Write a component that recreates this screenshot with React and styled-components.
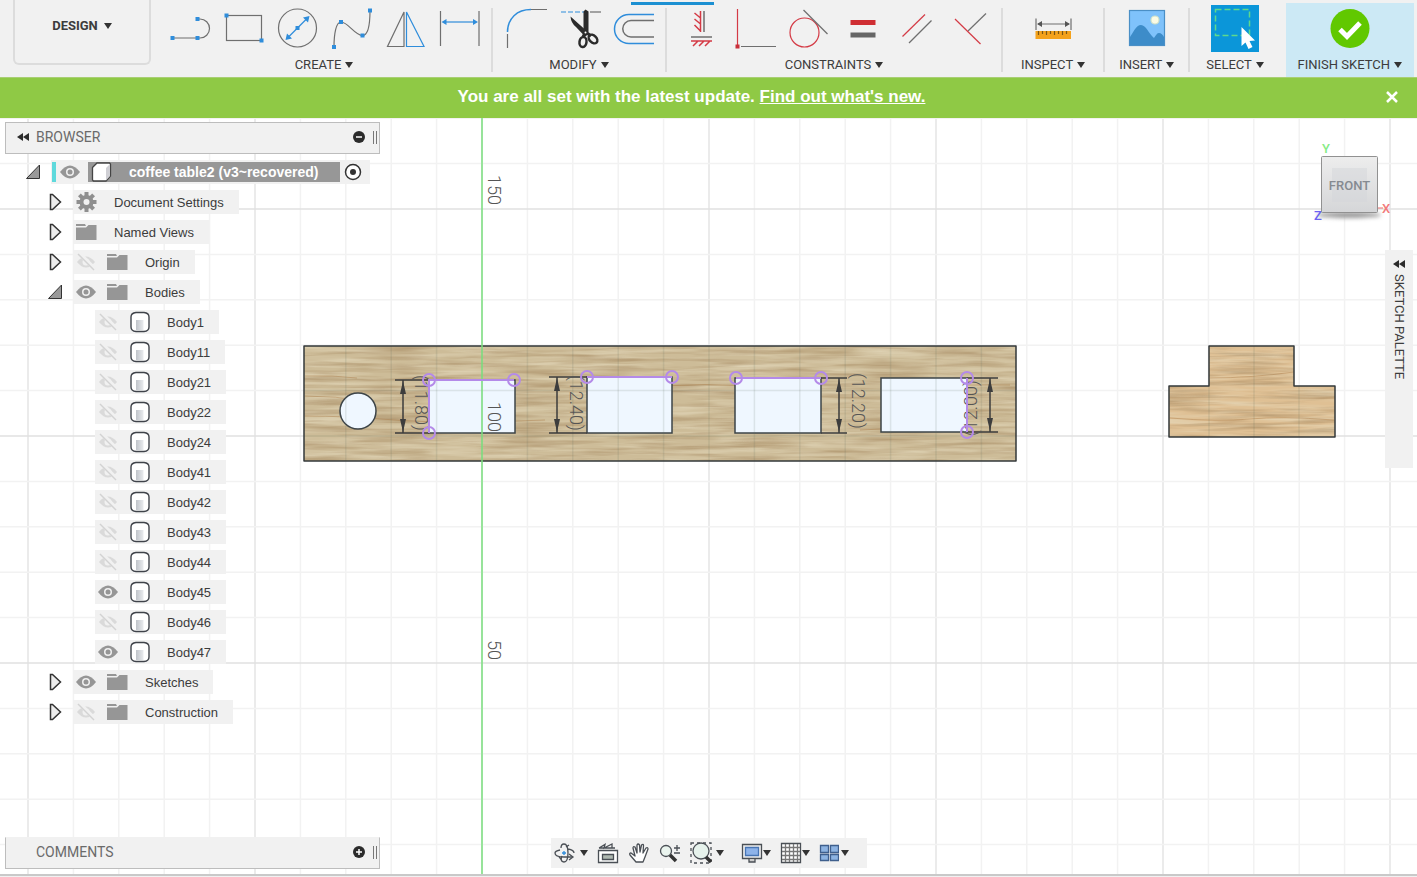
import React from "react";
import styled, { createGlobalStyle, css } from "styled-components";

const GlobalStyle = createGlobalStyle`
  * {
    box-sizing: border-box;
  }
  body {
    margin: 0;
    background: #f1f1f1;
    font-family: "Liberation Sans", Arial, sans-serif;
    color: #3c3c3c;
  }
  button {
    margin: 0;
    padding: 0;
    border: 0;
    background: none;
    font: inherit;
    color: inherit;
    cursor: pointer;
  }
  svg {
    display: block;
  }
`;

// page
const Page = styled.div`
  min-height: 100vh;
  display: flex;
  flex-direction: column;
  padding-bottom: 1px;
`;

// toolbar
const Toolbar = styled.header`
  position: relative;
  display: flex;
  height: 77px;
  padding-right: 3px;
  background: #f1f1f1;
  font-family: Roboto, "Liberation Sans", sans-serif;
  font-size: 13px;
`;
const ActiveTab = styled.div`
  position: absolute;
  top: 2px;
  left: 631px;
  width: 83px;
  height: 3px;
  background: #1c90d2;
`;
const Workspace = styled.button`
  display: flex;
  align-items: center;
  justify-content: center;
  gap: 6px;
  width: 138px;
  height: 65px;
  margin: 0 6px 0 13px;
  padding-bottom: 12px;
  border: 2px solid #dcdcdc;
  border-top: 0;
  border-radius: 0 0 6px 6px;
  font-weight: 700;
`;
const Caret = styled.span`
  flex: none;
  border: 4px solid transparent;
  border-top: 6px solid #333;
  border-bottom: 0;
`;
const Group = styled.section`
  display: flex;
  flex-direction: column;
  align-items: center;
  padding: 5px ${(p) => p.$pad}px 0;
  position: relative;
  margin-right: 2px;
  ${(p) =>
    p.$divider &&
    css`
      &::after {
        content: "";
        position: absolute;
        top: 8px;
        right: -2px;
        width: 2px;
        height: 64px;
        background: #dcdcdc;
      }
    `}
`;
const FinishGroup = styled.section`
  display: flex;
  flex-direction: column;
  align-items: center;
  margin: 3px 0 0 auto;
  padding: 2px 12px 0;
  background: #cce9f5;
`;
const Tools = styled.div`
  display: flex;
`;
const Tool = styled.button`
  width: 54px;
  height: 47px;
`;
const GroupLabel = styled.button`
  display: flex;
  align-items: center;
  gap: 4px;
  height: 25px;
  line-height: 25px;
  white-space: nowrap;
`;

// update banner
const Banner = styled.div`
  display: grid;
  grid-template-columns: 50px 1fr 50px;
  align-items: center;
  height: 41px;
  padding-bottom: 2px;
  border-top: 1px solid #a9cf74;
  background: #8fc945;
  color: #fff;
  font-size: 17px;
  font-weight: 700;
`;
const BannerText = styled.p`
  grid-column: 2;
  margin: 0;
  padding-right: 34px;
  text-align: center;
`;
const BannerLink = styled.a`
  color: #fff;
`;
const BannerClose = styled.button`
  display: flex;
  justify-content: center;
`;

// viewport
const Viewport = styled.main`
  position: relative;
  flex: 1;
  display: flex;
  flex-direction: column;
  padding: 4px 4px 5px 5px;
  border-bottom: 2px solid #c9c9c9;
  background: #fff;
  overflow: hidden;
`;
const Scene = styled.svg`
  position: absolute;
  inset: 0;
  width: 100%;
  height: 100%;
`;
const SceneText = styled.text`
  font-family: Roboto, "Liberation Sans", sans-serif;
  font-size: 18px;
  font-weight: 300;
  fill: #555;
`;
const Panels = styled.div`
  position: relative;
  flex: 1;
  display: flex;
  justify-content: space-between;
`;
const Footer = styled.footer`
  position: relative;
  display: grid;
  grid-template-columns: 1fr auto 1fr;
  align-items: center;
`;
const PanelHeader = styled.div`
  display: flex;
  align-items: center;
  width: 375px;
  height: 32px;
  padding: 0 2px 2px 10px;
  border: 1px solid #bdbdbd;
  ${(p) => p.$footer && "border-top-color: #f1f1f1;"}
  background: #f1f1f1;
  font-family: Roboto, "Liberation Sans", sans-serif;
  font-size: 14px;
  color: #6a6a6a;
`;
const PanelTitle = styled.h2`
  flex: 1;
  margin: 0;
  font: inherit;
`;
const HeaderSlot = styled.button`
  width: 20px;
  height: 8px;
`;
const Grip = styled.span`
  width: 4px;
  height: 13px;
  margin-left: 8px;
  border: 1px solid #777;
  border-width: 0 1px;
`;

// browser tree
const Tree = styled.ul`
  margin: 0;
  padding: ${(p) => (p.$root ? "3px 0 0 20px" : "0 0 0 22px")};
  list-style: none;
`;
const Row = styled.div`
  display: flex;
  align-items: center;
  height: 30px;
`;
const Toggle = styled.button`
  width: 26px;
  height: 18px;
`;
const ToggleSpace = styled.span`
  width: 26px;
`;
const RowBody = styled.div`
  display: flex;
  align-items: center;
  height: 24px;
  padding: 0 15px 0 3px;
  background: #f1f1f1;
  font-size: 13px;
  white-space: nowrap;
`;
const Eye = styled.button`
  width: 31px;
  height: 20px;
`;
const RowIcon = styled.span`
  width: 38px;
`;
const RootBody = styled.div`
  display: flex;
  align-items: center;
  height: 24px;
  padding: 0 8px 0 1px;
  background: #f1f1f1;
`;
const RootMark = styled.span`
  width: 4px;
  height: 20px;
  margin-right: 4px;
  background: #5fd9dc;
`;
const RootName = styled.div`
  display: flex;
  align-items: center;
  width: 252px;
  height: 20px;
  padding-left: 3px;
  margin: 0 4px 0 -3px;
  background: #979797;
  color: #fff;
  font-size: 14px;
  font-weight: 700;
`;

// right side
const Side = styled.aside`
  display: flex;
  flex-direction: column;
  align-items: flex-end;
`;
const ViewCube = styled.svg`
  margin: 16px 18px 22px 0;
`;
const AxisText = styled.text`
  font-family: Roboto, sans-serif;
  font-size: 13px;
  font-weight: 500;
`;
const Palette = styled.button`
  display: flex;
  flex-direction: column;
  align-items: center;
  gap: 6px;
  width: 28px;
  height: 218px;
  padding-top: 10px;
  background: #f1f1f1;
`;
const PaletteTitle = styled.span`
  writing-mode: vertical-rl;
  font-family: Roboto, "Liberation Sans", sans-serif;
  font-size: 13px;
`;

// navigation bar
const NavBar = styled.nav`
  display: flex;
  align-items: center;
  gap: 9px;
  width: 316px;
  height: 30px;
  padding-left: 3px;
  background: #f1f1f1;
`;
const NavButton = styled.button`
  display: flex;
  align-items: center;
  gap: ${(p) => p.$gap || 0}px;
  margin-left: ${(p) => (p.$apart ? 8 : 0)}px;
`;

const GREY = "#6f6f6f";
const BLUE = "#2f8ddb";
const RED = "#d43a45";

const Dot = ({ x, y, fill = BLUE }) => (
  <rect x={x - 2} y={y - 2} width="4" height="4" fill={fill} />
);

const ToolIcon = ({ children }) => (
  <svg width="54" height="47" viewBox="0 0 54 47" fill="none" stroke={GREY} strokeWidth="1.2">
    {children}
  </svg>
);

const createTools = [
  {
    name: "Line",
    icon: (
      <>
        <path d="M10.5 33H38a9.5 9.5 0 0 0 0-19h-2.5" />
        <g stroke="none">
          <Dot x={10.5} y={33} />
          <Dot x={35.5} y={33} />
          <Dot x={35.5} y={14} />
        </g>
      </>
    ),
  },
  {
    name: "Rectangle",
    icon: (
      <>
        <rect x="10.5" y="10.5" width="35" height="25" />
        <g stroke="none">
          <Dot x={10.5} y={10.5} />
          <Dot x={45.5} y={35.5} />
        </g>
      </>
    ),
  },
  {
    name: "Circle",
    icon: (
      <>
        <circle cx="27.5" cy="23" r="19" />
        <path d="M19 31.5 36 14.5" stroke={BLUE} />
        <g stroke="none" fill={BLUE}>
          <path d="m39.5 11-1.5 6.5-5-5zM15.500 35l1.5-6.500 5 5z" />
          <Dot x={27.5} y={23} />
        </g>
      </>
    ),
  },
  {
    name: "Spline",
    icon: (
      <>
        <path d="M10 42C10 29 12 17 17 17c7 0 14 13.5 21.5 13.5C45 30.5 46 16 46 5.5" />
        <g stroke="none">
          <Dot x={10} y={42} />
          <Dot x={17} y={17} />
          <Dot x={38.5} y={30.5} />
          <Dot x={46} y={5.5} />
        </g>
      </>
    ),
  },
  {
    name: "Mirror",
    icon: (
      <>
        <path d="M26 7v34.5H9.5z" />
        <path d="M28.5 7v34.5H46z" stroke={BLUE} />
      </>
    ),
  },
  {
    name: "Dimension",
    icon: (
      <>
        <path d="M8.5 6v35M47 6v35" />
        <path d="M12 17h32" stroke={BLUE} />
        <path d="m9.5 17 5-3v6zM46 17l-5-3v6z" fill={BLUE} stroke="none" />
      </>
    ),
  },
];

const modifyTools = [
  {
    name: "Fillet",
    icon: (
      <>
        <path d="M9.5 29v14M33 4.5h16" />
        <path d="M9.5 27C9.5 13.5 19 4.5 33 4.5" stroke={BLUE} strokeWidth="1.5" />
      </>
    ),
  },
  {
    name: "Trim",
    icon: (
      <>
        <path d="M9 7h24" stroke={BLUE} strokeDasharray="5 2" />
        <path d="M38 7h11" />
        <path d="M31.5 6.5 33.5 4.5l3 2V27l-3 2.5-2-2z" fill="#2b2b2b" stroke="none" />
        <path d="M18.5 11.5 33 24.5l4 4.5-4 2.5-9-9.5q-5-4-5.5-10.5z" fill="#2b2b2b" stroke="none" />
        <path d="m33 28-2 4M35 28l4 3" stroke="#2b2b2b" strokeWidth="3" />
        <ellipse cx="31" cy="37" rx="3.5" ry="5" stroke="#2b2b2b" strokeWidth="2.5" transform="rotate(8 31 37)" />
        <ellipse cx="41" cy="34" rx="3.5" ry="5" stroke="#2b2b2b" strokeWidth="2.5" transform="rotate(-45 41 34)" />
        <circle cx="33.5" cy="27.5" r="1" fill="#fff" stroke="none" />
      </>
    ),
  },
  {
    name: "Offset",
    icon: (
      <>
        <path d="M48 9.5H23a14.5 14.5 0 0 0 0 29h25" stroke={BLUE} strokeWidth="1.5" />
        <path d="M48 15.5H25a8 8 0 0 0 0 16.5h23" strokeWidth="1.5" />
      </>
    ),
  },
];

const constraintTools = [
  {
    name: "Horizontal/Vertical",
    icon: (
      <>
        <path d="M32 6v21M19 32h21" strokeWidth="1.5" />
        <path
          d="M28.5 6v21M22.5 8l6 5M22.5 14l6 5M22.5 20l6 6M19 36h21M26 36l-5 5M32 36l-5 5M38 36l-5 5"
          stroke={RED}
          strokeWidth="1.5"
        />
      </>
    ),
  },
  {
    name: "Coincident",
    icon: (
      <>
        <path d="M15 41.5h35" />
        <path d="M11.5 4v36" stroke={RED} />
        <rect x="9.5" y="39.5" width="4" height="4" fill="#c92f39" stroke="none" />
      </>
    ),
  },
  {
    name: "Tangent",
    icon: (
      <>
        <circle cx="24.5" cy="27.5" r="14.5" stroke={RED} />
        <path d="m23.5 5 24 24" />
      </>
    ),
  },
  {
    name: "Equal",
    icon: (
      <>
        <path d="M16.5 17.5h25" stroke="#cf2e33" strokeWidth="5" />
        <path d="M16.5 30h25" stroke="#666" strokeWidth="5" />
      </>
    ),
  },
  {
    name: "Parallel",
    icon: (
      <>
        <path d="m14.5 31.5 22.5-22" stroke={RED} />
        <path d="m21 38 22.5-22.5" />
      </>
    ),
  },
  {
    name: "Perpendicular",
    icon: (
      <>
        <path d="m26 26 18-17.5" />
        <path d="m13 14 25.5 25" stroke={RED} />
      </>
    ),
  },
];

const InspectIcon = () => (
  <ToolIcon>
    <path d="M10 13.5V25M45 13.5V25M12 19h31" />
    <path d="m11 19 5-3v6zM44 19l-5-3v6z" fill="#555" stroke="none" />
    <rect x="9.5" y="26" width="35.5" height="8" fill="#f4a21c" stroke="none" />
    <path d="M12.5 26v4M16.5 26v3M20.5 26v4M24.5 26v3M28.5 26v4M32.5 26v3M36.5 26v4M40.5 26v3" stroke="#7a5614" />
  </ToolIcon>
);

const InsertIcon = () => (
  <ToolIcon>
    <rect x="9.5" y="5.5" width="35" height="35" fill="#7fc2fb" stroke="#4a8fc6" />
    <path d="M10 32c3-4 6-12 11-12s8 9 13 13c2-3 3-5 5-5s4 2 5 4v8H10z" fill="#3d8cc9" stroke="none" />
    <circle cx="35" cy="15" r="4" fill="#fbfbe4" stroke="#cfe1c9" />
  </ToolIcon>
);

const SelectIcon = () => (
  <ToolIcon>
    <rect x="3" width="48" height="47" fill="#0b96d9" stroke="none" />
    <rect x="7.5" y="4.5" width="34" height="26" stroke="#5fd98c" strokeWidth="1.5" strokeDasharray="6 3" />
    <path d="M33.5 22v19l4-3.5 3 6.5 4-2-3-6 5.5-.5z" fill="#fff" stroke="none" />
  </ToolIcon>
);

const FinishIcon = () => (
  <ToolIcon>
    <circle cx="27" cy="23.5" r="19.5" fill="#61c800" stroke="none" />
    <path d="m17 24.5 7 7 13-13.5" stroke="#fff" strokeWidth="5" />
  </ToolIcon>
);

const ToolGroup = ({ label, tools }) => (
  <Group $pad={5} $divider>
    <Tools>
      {tools.map((tool) => (
        <Tool key={tool.name} aria-label={tool.name}>
          <ToolIcon>{tool.icon}</ToolIcon>
        </Tool>
      ))}
    </Tools>
    <GroupLabel>
      {label}
      <Caret />
    </GroupLabel>
  </Group>
);

const SingleGroup = ({ label, icon, pad, divider }) => (
  <Group $pad={pad} $divider={divider}>
    <Tool aria-label={label}>{icon}</Tool>
    <GroupLabel>
      {label}
      <Caret />
    </GroupLabel>
  </Group>
);

const CollapseIcon = () => (
  <svg width="14" height="8" viewBox="0 0 14 8">
    <path d="M7 0v8L1 4zM13 0v8L7 4z" fill="#2b2b2b" />
  </svg>
);

const RoundIcon = ({ plus }) => (
  <svg width="12" height="12" viewBox="0 0 12 12">
    <circle cx="6" cy="6" r="6" fill="#2b2b2b" />
    <path d={plus ? "M3 6h6M6 3v6" : "M3 6h6"} stroke="#fff" strokeWidth="1.5" />
  </svg>
);

const ArrowIcon = ({ open }) => (
  <svg width="17" height="18" viewBox="0 0 17 18">
    {open ? (
      <path d="M14.5 2v13.5H1.500z" fill="#999" stroke="#333" />
    ) : (
      <path d="M3.5 1.5h2L13.5 9l-8 7.5h-2z" fill="#ececec" stroke="#333" strokeWidth="1.5" />
    )}
  </svg>
);

const EyeIcon = ({ hidden }) => (
  <svg width="20" height="20" viewBox="0 0 20 20">
    {hidden ? (
      <>
        <path d="M1 10q9-11 18 0-9 11-18 0z" fill="#dadada" />
        <circle cx="10" cy="10" r="3.5" fill="#f1f1f1" />
        <path d="m3 1 16 16" stroke="#f1f1f1" strokeWidth="4" />
        <path d="m2 2 16 16" stroke="#d3d3d3" strokeWidth="1.5" />
      </>
    ) : (
      <g fill="#969696">
        <path d="M0 10q10-13 20 0-10 13-20 0z" />
        <circle cx="10" cy="10" r="4" fill="#f1f1f1" />
        <circle cx="10" cy="10" r="2.5" />
      </g>
    )}
  </svg>
);

const FolderIcon = () => (
  <svg width="21" height="18" viewBox="0 0 21 18">
    <path d="M0 1h9l1 2H0zM0 4.500h10L12.500 2H20.500v15H0z" fill="#969696" />
  </svg>
);

const GearIcon = () => (
  <svg width="21" height="20" viewBox="-10.5 -10 21 20">
    <g fill="#8f8f8f">
      {[0, 45, 90, 135].map((a) => (
        <rect key={a} x="-2" y="-10" width="4" height="20" transform={`rotate(${a})`} />
      ))}
      <circle r="7" />
    </g>
    <circle r="3" fill="#f1f1f1" />
  </svg>
);

const BodyIcon = () => (
  <svg width="22" height="22" viewBox="0 0 22 22">
    <path
      d="M7 1.500h8q5 .5 5 4.500v10q0 4-5 4.500H7q-5-.5-5-4.500V6q0-4 5-4.500z"
      fill="#fff"
      stroke="#3f434a"
      strokeWidth="1.4"
    />
    <path d="M7 9h7.500v10H7z" fill="url(#body-shade)" />
  </svg>
);

const CubeIcon = () => (
  <svg width="21" height="20" viewBox="0 0 21 20">
    <path d="M1.500 5.500 6 1h12.500l1 1v12L15 19H2.500l-1-1z" fill="#fff" stroke="#444" strokeWidth="1.3" />
    <path d="M15 6 19 2v12l-4 4.500z" fill="#cfcfd4" />
  </svg>
);

const icons = { folder: <FolderIcon />, gear: <GearIcon />, body: <BodyIcon /> };

const visibleBodies = ["45", "47"];
const bodies = ["1", "11", "21", "22", "24", "41", "42", "43", "44", "45", "46", "47"].map(
  (n) => ({
    name: `Body${n}`,
    icon: "body",
    eye: visibleBodies.includes(n) ? "on" : "off",
    leaf: true,
  })
);

const nodes = [
  { name: "Document Settings", icon: "gear" },
  { name: "Named Views", icon: "folder" },
  { name: "Origin", icon: "folder", eye: "off" },
  { name: "Bodies", icon: "folder", eye: "on", children: bodies },
  { name: "Sketches", icon: "folder", eye: "on" },
  { name: "Construction", icon: "folder", eye: "off" },
];

const TreeNode = ({ node }) => (
  <li>
    <Row>
      {node.leaf ? (
        <ToggleSpace />
      ) : (
        <Toggle aria-label={`Expand ${node.name}`} aria-expanded={!!node.children}>
          <ArrowIcon open={!!node.children} />
        </Toggle>
      )}
      <RowBody>
        {node.eye && (
          <Eye aria-label={`Show or hide ${node.name}`}>
            <EyeIcon hidden={node.eye === "off"} />
          </Eye>
        )}
        <RowIcon>{icons[node.icon]}</RowIcon>
        {node.name}
      </RowBody>
    </Row>
    {node.children && (
      <Tree>
        {node.children.map((child) => (
          <TreeNode key={child.name} node={child} />
        ))}
      </Tree>
    )}
  </li>
);

const Browser = () => (
  <section>
    <PanelHeader>
      <HeaderSlot aria-label="Collapse browser">
        <CollapseIcon />
      </HeaderSlot>
      <PanelTitle>BROWSER</PanelTitle>
      <button aria-label="Hide browser">
        <RoundIcon />
      </button>
      <Grip />
    </PanelHeader>
    <Tree $root>
      <li>
        <Row>
          <Toggle aria-label="Collapse document" aria-expanded="true">
            <ArrowIcon open />
          </Toggle>
          <RootBody>
            <RootMark />
            <Eye aria-label="Show or hide document">
              <EyeIcon />
            </Eye>
            <RootName>
              <RowIcon>
                <CubeIcon />
              </RowIcon>
              coffee table2 (v3~recovered)
            </RootName>
            <button aria-label="Activate document">
              <svg width="18" height="18" viewBox="0 0 18 18">
                <circle cx="9" cy="9" r="7.5" fill="#fff" stroke="#333" strokeWidth="1.5" />
                <circle cx="9" cy="9" r="3" fill="#333" />
              </svg>
            </button>
          </RootBody>
        </Row>
        <Tree>
          {nodes.map((node) => (
            <TreeNode key={node.name} node={node} />
          ))}
        </Tree>
      </li>
    </Tree>
  </section>
);

// sketch geometry, in scene units with the 150 mark at y = 91
const CELL = 45.4;
const range = (from, to) => Array.from({ length: to - from + 1 }, (_, i) => from + i);

const GridLines = () => (
  <g>
    {range(-10, 50).map((i) => (
      <path
        key={`v${i}`}
        d={`M${482 + i * CELL} 0v2000`}
        stroke={i % 5 === 0 ? "#e4e4e4" : "#f2f2f2"}
        strokeWidth="1.5"
      />
    ))}
    {range(-2, 40).map((i) => (
      <path
        key={`h${i}`}
        d={`M0 ${91 + i * CELL}h4000`}
        stroke={i % 5 === 0 ? "#e0e0e0" : "#f2f2f2"}
        strokeWidth="1.5"
      />
    ))}
  </g>
);

const WoodGrid = () => (
  <g stroke="#5f6a5f" strokeOpacity="0.14" strokeWidth="1.5">
    {range(-3, 11).map((i) => (
      <path key={i} d={`M${482 + i * CELL} 228v115`} />
    ))}
    <path d="M304 272.600h712M304 318h712M1254 228v91M1209 268v51M1299 268v51" />
  </g>
);

const holes = [
  { x: 429, y: 262, w: 86, h: 53 },
  { x: 587, y: 259, w: 85, h: 56 },
  { x: 735, y: 260, w: 86, h: 55 },
  { x: 881, y: 260, w: 86, h: 54 },
];

const dimensions = [
  { x: 403, top: 262, bottom: 315, from: 395, to: 429 },
  { x: 557, top: 259, bottom: 315, from: 549, to: 587 },
  { x: 839, top: 260, bottom: 315, from: 821, to: 847 },
  { x: 990, top: 260, bottom: 314, from: 967, to: 998 },
];

const points = [
  [429, 262],
  [514, 262],
  [429, 315],
  [587, 259],
  [672, 259],
  [736, 260],
  [821, 260],
  [967, 260],
  [967, 314],
];

const SketchScene = () => (
  <Scene role="img" aria-label="Sketch">
    <defs>
      <linearGradient id="body-shade">
        <stop offset="0" stopColor="#bfc3c9" />
        <stop offset="1" stopColor="#e9ebee" />
      </linearGradient>
      <filter id="wood" x="0" y="0" width="100%" height="100%" colorInterpolationFilters="sRGB">
        <feTurbulence type="fractalNoise" baseFrequency="0.014 0.22" numOctaves="3" seed="8" result="noise" />
        <feColorMatrix
          in="noise"
          values="0 0 0 0 .62  0 0 0 0 .5  0 0 0 0 .34  1.2 0 0 0 -.5"
          result="dark"
        />
        <feColorMatrix
          in="noise"
          values="0 0 0 0 .9  0 0 0 0 .86  0 0 0 0 .75  0 1.4 0 0 -.55"
          result="light"
        />
        <feMerge result="grain">
          <feMergeNode in="SourceGraphic" />
          <feMergeNode in="light" />
          <feMergeNode in="dark" />
        </feMerge>
        <feComposite in="grain" in2="SourceGraphic" operator="in" />
      </filter>
    </defs>
    <GridLines />
    <rect x="304" y="228" width="712" height="115" fill="#cdbc98" filter="url(#wood)" />
    <path
      d="M1169 268h40v-40h85v40h41v51h-166z"
      fill="#dfc094"
      filter="url(#wood)"
    />
    <g stroke="#a5733f" strokeOpacity="0.4" fill="none">
      <path d="M305 258q28-1 52 2M305 298q40 0 90 4t150 0M305 278q30 0 62 5M660 268q45-3 90 0M930 267h80M860 312q60-4 120 2" />
      <path d="M1210 260q40 0 84-6M1170 300q50 4 80 1t84 1" />
    </g>
    <g fill="#eff7ff" stroke="#3d4448" strokeWidth="1.5">
      <circle cx="358" cy="293" r="18" />
      {holes.map((h) => (
        <rect key={h.x} x={h.x} y={h.y} width={h.w} height={h.h} />
      ))}
    </g>
    <WoodGrid />
    <g fill="none" stroke="#33383a" strokeWidth="1.5" strokeLinejoin="round">
      <rect x="304" y="228" width="712" height="115" />
      <path d="M1169 268h40v-40h85v40h41v51h-166z" />
    </g>
    <path d="M482 0v2000" stroke="#7be07f" strokeWidth="1.5" />
    {dimensions.map((d) => (
      <g key={d.x} stroke="#3d3d3d" strokeWidth="1.5" fill="#3d3d3d">
        <path d={`M${d.from} ${d.top}H${d.to}M${d.from} ${d.bottom}H${d.to}M${d.x} ${d.top}V${d.bottom}`} />
        <path
          d={`M${d.x} ${d.top + 1}l3 13h-6zM${d.x} ${d.bottom - 1}l3-13h-6z`}
          stroke="none"
        />
      </g>
    ))}
    <SceneText transform="translate(488 57) rotate(90)">150</SceneText>
    <SceneText transform="translate(488 284) rotate(90)">100</SceneText>
    <SceneText transform="translate(488 522) rotate(90)">50</SceneText>
    <SceneText transform="translate(415 257) rotate(90)">(11.80)</SceneText>
    <SceneText transform="translate(570 257) rotate(90)">(12.40)</SceneText>
    <SceneText transform="translate(852 255) rotate(90)">(12.20)</SceneText>
    <SceneText transform="translate(977 318) rotate(-90)">(12.00)</SceneText>
    <g stroke="#b48ae8" strokeWidth="2" fill="none">
      <path d="M429 315v-53h85M587 259h85M736 260h85M967 260v54" />
      {points.map(([x, y]) => (
        <circle key={`${x}-${y}`} cx={x} cy={y} r="6" />
      ))}
    </g>
  </Scene>
);

const Cube = () => (
  <ViewCube width="90" height="90" viewBox="0 0 90 90">
    <defs>
      <linearGradient id="cube-face" x2="0" y2="1">
        <stop offset="0" stopColor="#ededed" />
        <stop offset="1" stopColor="#d5d6d8" />
      </linearGradient>
      <filter id="soft" x="-20%" y="-100%" width="140%" height="300%">
        <feGaussianBlur stdDeviation="2" />
      </filter>
    </defs>
    <ellipse cx="44" cy="77" rx="32" ry="3" fill="#999" filter="url(#soft)" />
    <path d="M73 70h5" stroke="#f06a6a" />
    <rect x="16.5" y="18.5" width="56" height="56" rx="1" fill="url(#cube-face)" stroke="#919191" />
    <rect x="27" y="30" width="35" height="34" fill="#d3d6da" fillOpacity="0.5" />
    <AxisText x="44.5" y="52" textAnchor="middle" fill="#858a91">
      FRONT
    </AxisText>
    <AxisText x="17" y="15" fill="#86ec86">
      Y
    </AxisText>
    <AxisText x="77" y="75" fill="#f27b7b">
      X
    </AxisText>
    <AxisText x="9" y="82" fill="#6c62f2">
      Z
    </AxisText>
  </ViewCube>
);

const NavIcon = ({ children, width = 22 }) => (
  <svg width={width} height="22" viewBox={`0 0 ${width} 22`} fill="none" stroke="#4a4f55" strokeWidth="1.3">
    {children}
  </svg>
);

const NavigationBar = () => (
  <NavBar aria-label="Navigation">
    <NavButton aria-label="Orbit" $gap={4}>
      <NavIcon>
        <path d="M7 6q0-4 3-4 4 0 4 9t-4 9q-3 0-3-4M6 8q-5 1-5 3 0 4 9 4h8M14 7q6 1 6 4" />
        <path d="m15 12 4 3-4 3M8 14l-1 3-2-2M12 5l3-2" />
        <path d="M10 9v4M8 11h4" stroke={BLUE} />
      </NavIcon>
      <Caret />
    </NavButton>
    <NavButton aria-label="Look at">
      <NavIcon>
        <path d="M1.500 8.500h19v12h-19z" fill="#fff" />
        <path d="M5.500 12.500h11v5h-11z" fill="#aeb8b0" />
        <path d="m2 6 6-3.500L7 6l8-4v4M2 6h16" />
      </NavIcon>
    </NavButton>
    <NavButton aria-label="Pan">
      <NavIcon>
        <path
          d="M8 20 2 13q-1-2 1-2l4 3-2-8q0-2 2-1l2 6V3q1-2 2.500 0l.5 7 1.500-7q2-1.500 2 .5L15 11l3-5q2-1 2 1l-3 8-2 5z"
          fill="#fff"
          strokeLinejoin="round"
        />
      </NavIcon>
    </NavButton>
    <NavButton aria-label="Zoom">
      <NavIcon>
        <circle cx="7" cy="9" r="5.5" fill="#eaf4ee" />
        <path d="m11 13 6 6" strokeWidth="3.5" stroke="#333" />
        <path d="M15 6h6M18 3v6M15 11h6" />
      </NavIcon>
    </NavButton>
    <NavButton aria-label="Fit" $gap={4}>
      <NavIcon>
        <path d="M1 1h20v20H1z" strokeDasharray="3 3" />
        <circle cx="11" cy="9" r="8" fill="#e6f2ec" />
        <path d="m16 15 5 5" strokeWidth="3.5" stroke="#333" />
      </NavIcon>
      <Caret />
    </NavButton>
    <NavButton aria-label="Display settings" $apart>
      <NavIcon>
        <path d="M1.500 2.500h19v14h-19z" fill="#eee" />
        <path d="M4.500 5.500h13v8h-13z" fill="#8db3ea" stroke="#4775b4" />
        <path d="M8 17v3h6v-3" fill="#ccc" />
      </NavIcon>
      <Caret />
    </NavButton>
    <NavButton aria-label="Grid and snaps">
      <NavIcon>
        <path d="M1.500 1.500h19v19h-19z" fill="#fff" />
        <path d="M5.500 2v18M9.500 2v18M13.500 2v18M17.500 2v18M2 5.500h18M2 9.500h18M2 13.500h18M2 17.500h18" stroke="#777" />
      </NavIcon>
      <Caret />
    </NavButton>
    <NavButton aria-label="Viewports" $gap={2}>
      <NavIcon width={20}>
        <path
          d="M1.500 3.500h8v7h-8zM11.500 3.500h8v7h-8zM1.500 12.500h8v6h-8zM11.500 12.500h8v6h-8z"
          fill="#8db3e2"
          stroke="#3f5f8d"
        />
      </NavIcon>
      <Caret />
    </NavButton>
  </NavBar>
);

const App = () => {
  return (
    <Page>
      <GlobalStyle />
      <Toolbar>
        <Workspace>
          DESIGN
          <Caret />
        </Workspace>
        <ToolGroup label="CREATE" tools={createTools} />
        <ToolGroup label="MODIFY" tools={modifyTools} />
        <ToolGroup label="CONSTRAINTS" tools={constraintTools} />
        <SingleGroup label="INSPECT" icon={<InspectIcon />} pad={18} divider />
        <SingleGroup label="INSERT" icon={<InsertIcon />} pad={14} divider />
        <SingleGroup label="SELECT" icon={<SelectIcon />} pad={16} />
        <FinishGroup>
          <Tool aria-label="Finish sketch">
            <FinishIcon />
          </Tool>
          <GroupLabel>
            FINISH SKETCH
            <Caret />
          </GroupLabel>
        </FinishGroup>
        <ActiveTab />
      </Toolbar>
      <Banner>
        <BannerText>
          You are all set with the latest update.{" "}
          <BannerLink href="#whats-new">Find out what's new.</BannerLink>
        </BannerText>
        <BannerClose aria-label="Close">
          <svg width="12" height="12" viewBox="0 0 12 12" stroke="#fff" strokeWidth="2.5">
            <path d="m1 1 10 10M11 1 1 11" />
          </svg>
        </BannerClose>
      </Banner>
      <Viewport>
        <SketchScene />
        <Panels>
          <Browser />
          <Side>
            <Cube />
            <Palette>
              <CollapseIcon />
              <PaletteTitle>SKETCH PALETTE</PaletteTitle>
            </Palette>
          </Side>
        </Panels>
        <Footer>
          <PanelHeader $footer>
            <HeaderSlot as="span" />
            <PanelTitle>COMMENTS</PanelTitle>
            <button aria-label="Show comments">
              <RoundIcon plus />
            </button>
            <Grip />
          </PanelHeader>
          <NavigationBar />
        </Footer>
      </Viewport>
    </Page>
  );
};

export default App;
